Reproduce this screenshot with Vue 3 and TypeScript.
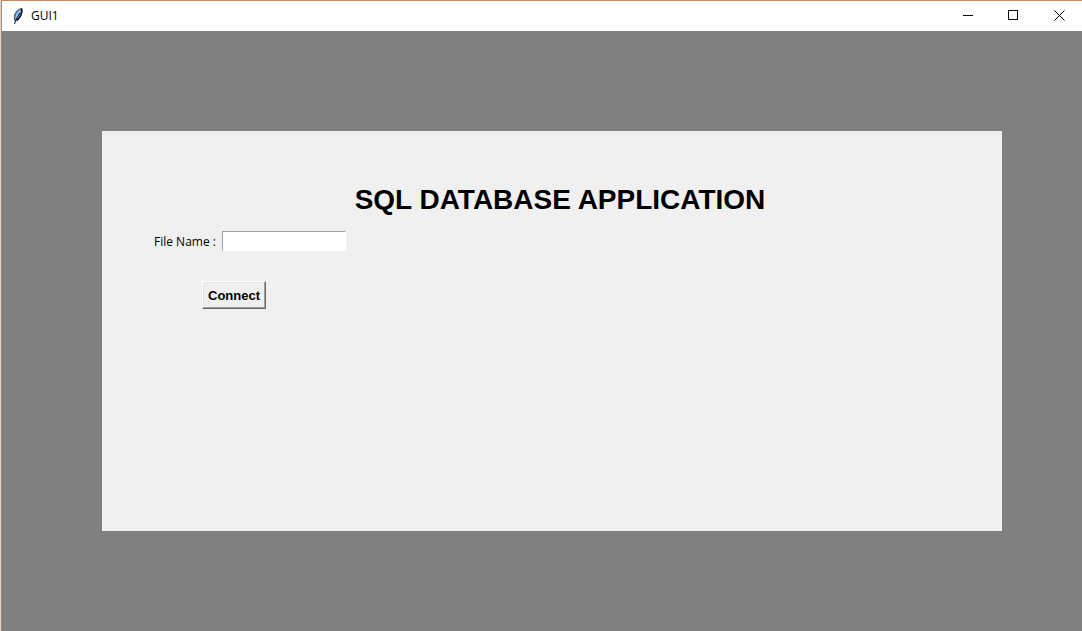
<script setup lang="ts">
import { ref } from 'vue'

const title = 'GUI1'
const fileName = ref('')
const connected = ref(false)

function connect(): void {
  connected.value = fileName.value.trim().length > 0
}
</script>

<template>
  <div class="window">
    <header class="titlebar">
      <svg class="feather" width="12" height="18" viewBox="0 0 12 18" aria-hidden="true">
        <path d="M9.500 1.500 C6.500 2 4 4.500 3 7 C2 10 2 12 3 14 L5 13.500 C8 11.500 9.500 8 10 4 Z" fill="#5b92cf" />
        <path d="M9.500 1.500 C6.500 2 4 4.500 3 7 C2 10 2 12 3 14" fill="none" stroke="#3c4854" stroke-width="1" />
        <path d="M9.500 1.500 L10 4 C9.500 8 8 11.500 4.500 13.500" fill="none" stroke="#0a0e12" stroke-width="1.500" />
        <path d="M8 3.500 C6 5.500 4.500 8 4 11" fill="none" stroke="#a9cdf0" stroke-width="1.200" />
        <path d="M8 6 C6 9 4 12 2.500 17" fill="none" stroke="#111" stroke-width="1" />
      </svg>
      <span class="name">{{ title }}</span>
      <div class="controls">
        <button type="button" aria-label="Minimize">
          <svg width="11" height="11" viewBox="0 0 11 11" shape-rendering="crispEdges"><path d="M1 5.500H11" stroke="#000" /></svg>
        </button>
        <button type="button" aria-label="Maximize">
          <svg width="11" height="11" viewBox="0 0 11 11" shape-rendering="crispEdges"><path d="M.5 .5H10.500V10.500H.5Z" transform="scale(.95)" fill="none" stroke="#000" /></svg>
        </button>
        <button type="button" aria-label="Close">
          <svg width="11" height="11" viewBox="0 0 11 11"><path d="M.5 .5L10.500 10.500M10.500 .5L.5 10.500" stroke="#000" /></svg>
        </button>
      </div>
    </header>
    <main class="canvas">
      <form class="panel" @submit.prevent="connect">
        <h1>SQL DATABASE APPLICATION</h1>
        <div class="field">
          <label for="file-name">File Name :</label>
          <input id="file-name" v-model="fileName" type="text" autocomplete="off" />
        </div>
        <button class="connect" type="submit" :aria-pressed="connected">Connect</button>
      </form>
    </main>
  </div>
</template>

<style>
body {
  margin: 0;
  background: #d9d9d9;
}
</style>

<style scoped>
.window {
  display: flex;
  flex-direction: column;
  box-sizing: border-box;
  min-height: 100vh;
  margin-left: 1px;
  border-top: 1px solid #bd8d66;
  border-left: 1px solid #a98262;
  background: #808080;
  font-family: "Open Sans", "Noto Sans", sans-serif;
  font-size: 12px;
  color: #000;
}

.titlebar {
  display: flex;
  align-items: center;
  height: 30px;
  padding-left: 10px;
  background: #fff;
}

.name {
  margin-left: 7px;
  padding-bottom: 2px;
}

.controls {
  display: flex;
  align-self: stretch;
  margin-left: auto;
}

.controls button {
  display: flex;
  align-items: center;
  justify-content: center;
  width: 46px;
  padding: 0 0 2px;
  border: 0;
  background: transparent;
}

.canvas {
  display: flex;
  flex: 1;
  padding: 100px 80px 100px 100px;
}

.panel {
  display: flex;
  flex: 1;
  flex-direction: column;
  align-items: flex-start;
  padding: 50px 52px;
  background: #f0f0f0;
}

h1 {
  align-self: center;
  margin: 0 0 12px 16px;
  font: bold 28px/38px "Liberation Sans", Arial, sans-serif;
}

.field {
  display: flex;
  align-items: center;
  gap: 6px;
}

.field input {
  box-sizing: border-box;
  width: 124px;
  height: 20px;
  padding: 0 2px;
  border: 1px solid;
  border-color: #a0a0a0 #fff #fff #a0a0a0;
  outline: 0;
  background: #fff;
  font: inherit;
}

.connect {
  height: 28px;
  margin: 30px 0 0 48px;
  padding: 0 5px;
  border: 1px solid;
  border-color: #fff #696969 #696969 #fff;
  box-shadow: inset -1px -1px #a0a0a0, inset 1px 1px #e3e3e3;
  background: #f0f0f0;
  color: #000;
  font: bold 13px "Liberation Sans", Arial, sans-serif;
}
</style>
